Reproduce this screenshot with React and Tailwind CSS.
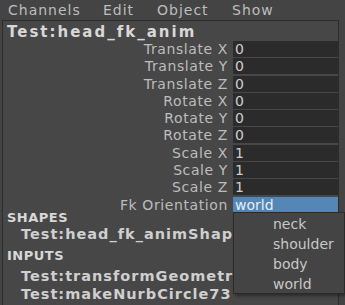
const rows = [
  ['Translate X', '0'],
  ['Translate Y', '0'],
  ['Translate Z', '0'],
  ['Rotate X', '0'],
  ['Rotate Y', '0'],
  ['Rotate Z', '0'],
  ['Scale X', '1'],
  ['Scale Y', '1'],
  ['Scale Z', '1'],
]

export default function App() {
  return (
    <div className="w-[345px] h-[305px] overflow-hidden bg-[#444444] text-[#bdbdbd] font-['DejaVu_Sans',sans-serif] relative">
      <div className="flex h-[20px] items-center text-[14px] leading-none tracking-[1px]">
        <span className="pl-[8px] w-[103px]">Channels</span>
        <span className="w-[54px]">Edit</span>
        <span className="w-[75px]">Object</span>
        <span>Show</span>
      </div>
      <div className="ml-[2px] mr-[6px] h-[290px] border border-[#2c2c2c] border-b-0 bg-[#474747] pt-[2px]">
        <div className="pl-[4px] h-[18px] text-[15px] font-bold text-[#d8d8d8] leading-[18px] tracking-[2px] whitespace-nowrap">Test:head_fk_anim</div>
        <div className="flex flex-col gap-[1.3px]">
          {rows.map(([label, val]) => (
            <div key={label} className="flex h-[16px] items-center text-[14px]">
              <span className="w-[230px] text-right pr-[5px] leading-none tracking-[0.6px]">{label}</span>
              <span className="flex-1 h-full bg-[#2b2b2b] pl-[2px] leading-[16px] text-[#cfcfcf]">{val}</span>
            </div>
          ))}
          <div className="flex h-[16px] items-center text-[14px]">
            <span className="w-[230px] text-right pr-[5px] leading-none tracking-[0.6px]">Fk Orientation</span>
            <span className="flex-1 h-full bg-[#5486b6] pl-[2px] leading-[16px] text-[#e6eef6]">world</span>
          </div>
        </div>
        <div className="pl-[4px] h-[10px] text-[13px] font-bold text-[#d8d8d8] leading-[10px] tracking-[0.5px]">SHAPES</div>
        <div className="pl-[18px] h-[22px] text-[14.5px] font-bold text-[#cfcfcf] leading-[22px] tracking-[1px] whitespace-nowrap">Test:head_fk_animShape</div>
        <div className="pl-[4px] h-[22px] text-[13px] font-bold text-[#d8d8d8] leading-[22px] tracking-[0.5px]">INPUTS</div>
        <div className="pl-[18px] h-[18px] text-[14.5px] font-bold text-[#cfcfcf] leading-[18px] tracking-[1px] whitespace-nowrap">Test:transformGeometry</div>
        <div className="pl-[18px] h-[18px] text-[14.5px] font-bold text-[#cfcfcf] leading-[18px] tracking-[1px] whitespace-nowrap">Test:makeNurbCircle73</div>
      </div>
      <div className="absolute left-[233px] top-[212px] w-[112px] h-[82px] bg-[#444444] border border-[#2a2a2a] shadow-[2px_2px_3px_rgba(0,0,0,0.4)] flex flex-col pl-[39px] pt-[1px] text-[14px] text-[#c8c8c8]">
        <span className="h-[20px] leading-[20px]">neck</span>
        <span className="h-[20px] leading-[20px]">shoulder</span>
        <span className="h-[20px] leading-[20px]">body</span>
        <span className="h-[20px] leading-[20px]">world</span>
      </div>
    </div>
  )
}
